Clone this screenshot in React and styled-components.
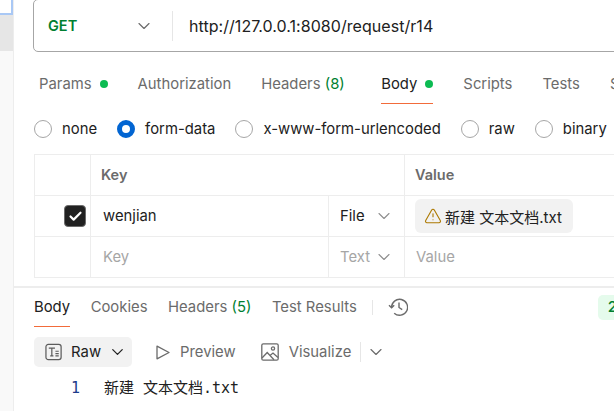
import styled, { createGlobalStyle } from "styled-components";
import { ChevronDown, TriangleAlert, Check } from "lucide-react";

const Global = createGlobalStyle`
  html, body {
    margin: 0;
    padding: 0;
    background: #fff;
    overflow: hidden;
  }
  body {
    font-family: Inter, "Noto Sans CJK SC", sans-serif;
    font-size: 14.85px;
    color: #212121;
  }
`;

const Page = styled.div`
  display: flex;
  width: 614px;
  height: 411px;
  overflow: hidden;
`;

const Sidebar = styled.div`
  flex: none;
  width: 13px;
  background: #f9f9f9;
  border-right: 1px solid #ededed;
`;

const SideItem = styled.div`
  width: 13px;
  height: 15px;
  background: #fff;
  border: solid #a9c8f5;
  border-width: 0 2px 2px 0;
  box-sizing: border-box;
`;

const SideHover = styled.div`
  height: 36px;
  background: #e6e6e6;
`;

const Main = styled.div`
  flex: none;
  width: 600px;
  display: flex;
  flex-direction: column;
`;

const Content = styled.div`
  padding-left: 19px;
  height: 288px;
  box-sizing: border-box;
  border-bottom: 2px solid #ededed;
`;

const UrlBar = styled.div`
  display: flex;
  align-items: center;
  width: 640px;
  height: 53px;
  margin-top: -1px;
  box-sizing: border-box;
  border: 1px solid #a6a6a6;
  border-radius: 5px;
`;

const Method = styled.div`
  display: flex;
  align-items: center;
  justify-content: space-between;
  width: 139px;
  height: 30px;
  padding: 0 18px 0 14px;
  box-sizing: border-box;
  border-right: 1px solid #e6e6e6;
  font-size: 14.5px;
  font-weight: 600;
  color: #007f31;
  svg {
    color: #6b6b6b;
  }
`;

const Url = styled.div`
  padding-left: 16px;
  white-space: nowrap;
  font-size: 16px;
  letter-spacing: 0.05px;
`;

const RequestTabs = styled.div`
  display: flex;
  gap: 30px;
  height: 46px;
  margin-top: 22px;
  padding-left: 6px;
  white-space: nowrap;
`;

const ResponseBar = styled.div`
  display: flex;
  align-items: flex-start;
  height: 30px;
  margin: 9px 0 10px;
  white-space: nowrap;
`;

const ResponseTabs = styled.div`
  display: flex;
  gap: 20.5px;
`;

const Tab = styled.div`
  display: flex;
  align-items: flex-start;
  height: 30px;
  gap: 8px;
  padding-bottom: 9px;
  box-sizing: border-box;
  line-height: 20px;
  color: ${(p) => (p.$active ? "#212121" : "#6b6b6b")};
  border-bottom: 1px solid ${(p) => (p.$active ? "#f26b3a" : "transparent")};
  margin-right: ${(p) => p.$after || 0}px;
`;

const Count = styled.span`
  color: #007f31;
`;

const Dot = styled.span`
  width: 8px;
  height: 8px;
  margin-top: 6px;
  border-radius: 50%;
  background: #0cbb52;
`;

const Separator = styled.span`
  flex: none;
  width: 1px;
  height: ${(p) => p.$height}px;
  background: #e6e6e6;
  margin: ${(p) => p.$margin};
`;

const HistoryButton = styled.span`
  display: flex;
  width: 20px;
  height: 20px;
  color: #6b6b6b;
`;

const StatusBadge = styled.div`
  flex: none;
  height: 25px;
  margin: -2px 0 0 190px;
  padding: 0 10px;
  border-radius: 5px;
  background: #e5fbec;
  color: #007f31;
  font-weight: 500;
  line-height: 25px;
`;

const RadioRow = styled.div`
  display: flex;
  align-items: center;
  height: 18px;
  padding-left: 1px;
  white-space: nowrap;
`;

const RadioItem = styled.label`
  display: flex;
  align-items: center;
  gap: 10px;
  margin-right: 20px;
`;

const Radio = styled.span`
  width: 18px;
  height: 18px;
  border-radius: 50%;
  box-sizing: border-box;
  border: ${(p) => (p.$on ? "5px solid #0265d2" : "1px solid #a6a6a6")};
  background: #fff;
`;

const Table = styled.div`
  display: grid;
  grid-template-columns: 56px 238px 76px 211px;
  grid-auto-rows: 41px;
  width: 581px;
  margin: 16px 0 0 1px;
  border: solid #ededed;
  border-width: 1px 0 0 1px;
  box-sizing: border-box;
`;

const Cell = styled.div`
  display: flex;
  align-items: center;
  justify-content: space-between;
  grid-column: span ${(p) => p.$span || 1};
  padding: 0 10px 0 11px;
  box-sizing: border-box;
  border: solid #ededed;
  border-width: 0 1px 1px 0;
  color: ${(p) => (p.$muted ? "#a6a6a6" : "#212121")};
  svg {
    color: #8f8f8f;
  }
`;

const HeadCell = styled(Cell)`
  padding-left: 10px;
  padding-bottom: 2px;
  font-size: 14.5px;
  font-weight: 600;
  color: #6b6b6b;
`;

const CheckCell = styled(Cell)`
  justify-content: flex-end;
  padding: 0 4px 0 0;
`;

const KeyText = styled.span`
  padding-left: 1px;
`;

const Checkbox = styled.span`
  display: flex;
  align-items: center;
  justify-content: center;
  width: 20px;
  height: 20px;
  border-radius: 4px;
  background: #212121;
  border: 1px solid #6b6b6b;
  svg {
    color: #fff;
  }
`;

const ValueCell = styled(Cell)`
  justify-content: flex-start;
  padding-left: 10px;
`;

const FileChip = styled.div`
  display: flex;
  align-items: center;
  gap: 3px;
  height: 34px;
  padding: 0 11px 0 9px;
  border-radius: 6px;
  background: #f2f2f2;
  white-space: nowrap;
  font-size: 15px;
  color: #212121;
  svg {
    color: #ad7a03;
  }
`;

const Response = styled.div`
  padding-left: 20px;
  flex: 1;
`;

const ViewBar = styled.div`
  display: flex;
  align-items: center;
  height: 30px;
`;

const RawButton = styled.div`
  display: flex;
  align-items: center;
  flex: none;
  width: 98px;
  height: 30px;
  padding: 0 5px 0 11px;
  gap: 9px;
  box-sizing: border-box;
  border-radius: 5px;
  background: #f2f2f2;
  svg.caret {
    margin-left: -2px;
  }
`;

const ViewOption = styled.div`
  display: flex;
  align-items: center;
  gap: ${(p) => p.$gap}px;
  margin-left: ${(p) => p.$left}px;
  color: #6b6b6b;
`;

const CaretButton = styled.span`
  display: flex;
  color: #6b6b6b;
`;

const CodeLine = styled.div`
  display: flex;
  margin-top: 12px;
  font-family: "DejaVu Sans Mono", "Noto Sans CJK SC", monospace;
  font-size: 15px;
  line-height: 18px;
`;

const LineNo = styled.span`
  flex: none;
  width: 33px;
  padding-left: 37px;
  color: #1d3b8b;
`;

const RawIcon = () => (
  <svg width="18" height="18" viewBox="0 0 18 18" fill="none" stroke="#5c5c5c" strokeWidth="1.3">
    <rect x="1" y="1" width="16" height="16" rx="2.5" />
    <path d="M4 5h6.5M7.2 5v8M5.5 13h3.4M11 8.2h3.5M11 10.6h3.5M11 13h3.5" />
  </svg>
);

const PlayIcon = () => (
  <svg width="14" height="15" viewBox="0 0 14 15" fill="none" stroke="#6b6b6b" strokeWidth="1.3" strokeLinejoin="round">
    <path d="M1 1.2 13 7.5 1 13.8Z" />
  </svg>
);

const ImageIcon = () => (
  <svg width="18" height="18" viewBox="0 0 18 18" fill="none" stroke="#6b6b6b" strokeWidth="1.3">
    <rect x="0.8" y="0.8" width="16.4" height="16.4" rx="1.5" />
    <circle cx="12" cy="5.5" r="1.6" />
    <path d="M1 15 6.2 9.5 13 16.8M9 12.4 12 10l5 4.6" />
  </svg>
);

const HistoryIcon = () => (
  <svg width="20" height="20" viewBox="0 0 20 20" fill="none" stroke="currentColor" strokeWidth="1.4">
    <path d="M3.6 10.5a8 8 0 1 1 2.6 5.7" />
    <path d="M1 8.2l2.6 2.6 2.6-2.6" />
    <path d="M11 5.5v5l3.2 2.2" />
  </svg>
);

export default function App() {
  return (
    <Page>
      <Global />
      <Sidebar>
        <SideItem />
        <SideHover />
      </Sidebar>
      <Main>
        <Content>
          <UrlBar>
            <Method>
              GET
              <ChevronDown size={20} strokeWidth={1.4} />
            </Method>
            <Url>http://127.0.0.1:8080/request/r14</Url>
          </UrlBar>
          <RequestTabs>
            <Tab>
              Params <Dot />
            </Tab>
            <Tab>Authorization</Tab>
            <Tab $after={6.5}>
              <span>
                Headers <Count>(8)</Count>
              </span>
            </Tab>
            <Tab $active>
              Body <Dot />
            </Tab>
            <Tab>Scripts</Tab>
            <Tab>Tests</Tab>
            <Tab>Settings</Tab>
          </RequestTabs>
          <RadioRow>
            <RadioItem>
              <Radio />
              none
            </RadioItem>
            <RadioItem>
              <Radio $on />
              form-data
            </RadioItem>
            <RadioItem>
              <Radio />
              x-www-form-urlencoded
            </RadioItem>
            <RadioItem>
              <Radio />
              raw
            </RadioItem>
            <RadioItem>
              <Radio />
              binary
            </RadioItem>
          </RadioRow>
          <Table>
            <Cell />
            <HeadCell $span={2}>Key</HeadCell>
            <HeadCell>Value</HeadCell>
            <CheckCell>
              <Checkbox>
                <Check size={15} strokeWidth={3.5} />
              </Checkbox>
            </CheckCell>
            <Cell>
              <KeyText>wenjian</KeyText>
            </Cell>
            <Cell>
              File
              <ChevronDown size={20} strokeWidth={1.3} />
            </Cell>
            <ValueCell>
              <FileChip>
                <TriangleAlert size={18} strokeWidth={1.5} />
                新建 文本文档.txt
              </FileChip>
            </ValueCell>
            <Cell />
            <Cell $muted>
              <KeyText>Key</KeyText>
            </Cell>
            <Cell $muted>
              Text
              <ChevronDown size={20} strokeWidth={1.3} />
            </Cell>
            <Cell $muted>Value</Cell>
          </Table>
        </Content>
        <Response>
          <ResponseBar>
            <ResponseTabs>
              <Tab $active>Body</Tab>
              <Tab>Cookies</Tab>
              <Tab>
                <span>
                  Headers <Count>(5)</Count>
                </span>
              </Tab>
              <Tab>Test Results</Tab>
            </ResponseTabs>
            <Separator $height={15} $margin="3px 15px 0" />
            <HistoryButton>
              <HistoryIcon />
            </HistoryButton>
            <StatusBadge>200 OK</StatusBadge>
          </ResponseBar>
          <ViewBar>
            <RawButton>
              <RawIcon />
              Raw
              <ChevronDown className="caret" size={20} strokeWidth={1.6} />
            </RawButton>
            <ViewOption $left={24} $gap={10}>
              <PlayIcon />
              Preview
            </ViewOption>
            <ViewOption $left={25.5} $gap={9.5}>
              <ImageIcon />
              Visualize
            </ViewOption>
            <Separator $height={20} $margin="0 5px 0 9px" />
            <CaretButton>
              <ChevronDown size={20} strokeWidth={1.4} />
            </CaretButton>
          </ViewBar>
          <CodeLine>
            <LineNo>1</LineNo>
            <span>新建 文本文档.txt</span>
          </CodeLine>
        </Response>
      </Main>
    </Page>
  );
}
